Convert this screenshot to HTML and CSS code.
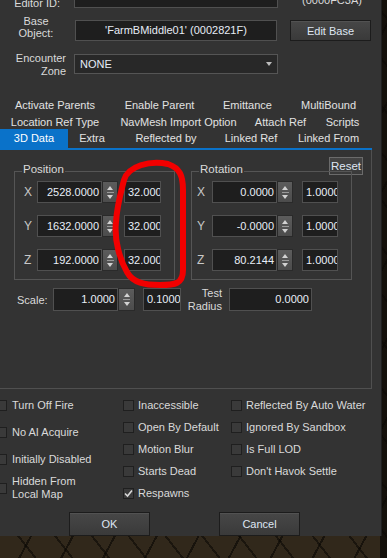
FILE: index.html
```html
<!DOCTYPE html>
<html>
<head>
    <meta charset="UTF-8">
    <title>Reference</title>
    <link rel="stylesheet" href="styles.css">
</head>
<body>
<div class="dlg">
    <div class="row row-editor">
        <span class="lbl-editor">Editor ID:</span>
        <div class="field field-editor"></div>
        <span class="formid">(0000FC3A)</span>
    </div>
    <div class="row row-base">
        <span class="lbl-base">Base<br>Object:</span>
        <div class="field field-base">'FarmBMiddle01' (0002821F)</div>
        <button class="btn btn-edit">Edit Base</button>
    </div>
    <div class="row row-zone">
        <span class="lbl-zone">Encounter<br>Zone</span>
        <div class="combo">NONE<em></em></div>
    </div>

    <div class="tabs">
        <div class="tabrow r1">
            <span>Activate Parents</span><span>Enable Parent</span><span>Emittance</span><span>MultiBound</span>
        </div>
        <div class="tabrow r2">
            <span>Location Ref Type</span><span>NavMesh Import Option</span><span>Attach Ref</span><span>Scripts</span>
        </div>
        <div class="tabrow r3">
            <span class="on">3D Data</span><span>Extra</span><span>Reflected by</span><span>Linked Ref</span><span>Linked From</span>
        </div>
    </div>

    <div class="panel">
        <button class="btn btn-reset">Reset</button>
        <div class="groups">
            <div class="grp grp-pos">
                <span class="grp-title">Position</span>
                <div class="vrow"><span class="axis">X</span><div class="num">2528.0000</div><div class="spin"><i></i></div><div class="step">32.0000</div></div>
                <div class="vrow"><span class="axis">Y</span><div class="num">1632.0000</div><div class="spin"><i></i></div><div class="step">32.0000</div></div>
                <div class="vrow"><span class="axis">Z</span><div class="num">192.0000</div><div class="spin"><i></i></div><div class="step">32.0000</div></div>
            </div>
            <div class="grp grp-rot">
                <span class="grp-title">Rotation</span>
                <div class="vrow"><span class="axis">X</span><div class="num">0.0000</div><div class="spin"><i></i></div><div class="step">1.0000</div></div>
                <div class="vrow"><span class="axis">Y</span><div class="num">-0.0000</div><div class="spin"><i></i></div><div class="step">1.0000</div></div>
                <div class="vrow"><span class="axis">Z</span><div class="num">80.2144</div><div class="spin"><i></i></div><div class="step">1.0000</div></div>
            </div>
        </div>
        <div class="scalerow">
            <span class="lbl-scale">Scale:</span>
            <div class="num">1.0000</div><div class="spin"><i></i></div><div class="step">0.1000</div>
            <span class="lbl-test">Test<br>Radius</span>
            <div class="num num-test">0.0000</div>
        </div>
    </div>

    <div class="checks">
        <div class="col col1">
            <label class="cb"><i></i>Turn Off Fire</label>
            <label class="cb"><i></i>No AI Acquire</label>
            <label class="cb"><i></i>Initially Disabled</label>
            <label class="cb two"><i></i>Hidden From<br>Local Map</label>
        </div>
        <div class="col">
            <label class="cb"><i></i>Inaccessible</label>
            <label class="cb"><i></i>Open By Default</label>
            <label class="cb"><i></i>Motion Blur</label>
            <label class="cb"><i></i>Starts Dead</label>
            <label class="cb"><i><svg width="9" height="9" viewBox="0 0 9 9"><path d="M1 4.5 L3.5 7 L8 1.5" fill="none" stroke="#d8d8d8" stroke-width="1.6"/></svg></i>Respawns</label>
        </div>
        <div class="col">
            <label class="cb"><i></i>Reflected By Auto Water</label>
            <label class="cb"><i></i>Ignored By Sandbox</label>
            <label class="cb"><i></i>Is Full LOD</label>
            <label class="cb"><i></i>Don't Havok Settle</label>
        </div>
    </div>

    <div class="btns">
        <button class="btn btn-dlg">OK</button>
        <button class="btn btn-dlg">Cancel</button>
    </div>
</div>

<svg class="mark" width="387" height="558" viewBox="0 0 387 558">
    <path d="M124 180 C128 166 150 160 168 164 C180 168 183 176 183 190 L183 270 C183 284 175 285 160 285 C145 285 133 283 127 272 C120 260 114 240 116 222 C117 205 121 192 124 180 Z" fill="none" stroke="#f20000" stroke-width="6" stroke-linejoin="round"/>
</svg>
</body>
</html>
```

FILE: styles.css
```css
* {
    box-sizing: border-box;
}

html, body {
    margin: 0;
    padding: 0;
}

body {
    position: relative;
    width: 387px;
    height: 558px;
    overflow: hidden;
    font-family: "Liberation Sans", Arial, sans-serif;
    font-size: 11px;
    color: #dadada;
    background:
        linear-gradient(90deg, rgba(0,0,0,0) 0 380px, rgba(10,8,5,.75) 380px),
        repeating-linear-gradient(118deg, rgba(0,0,0,0) 0 19px, rgba(8,6,3,.6) 19px 21px, rgba(0,0,0,0) 21px 37px),
        repeating-linear-gradient(52deg, rgba(0,0,0,0) 0 27px, rgba(8,6,3,.55) 27px 29px),
        #31281b;
}

.dlg {
    width: 382px;
    height: 548px;
    background: #333;
    border-right: 1px solid #1f1f1f;
}

.row {
    display: flex;
    align-items: flex-start;
}

.field {
    background: #1e1e1e;
    border: 1px solid #505050;
    color: #e6ecf6;
}

/* top fields */
.row-editor {
    margin-top: -12px;
    height: 20px;
}

.lbl-editor {
    width: 60px;
    text-align: right;
    padding-top: 9px;
    line-height: 13px;
}

.field-editor {
    margin-left: 14px;
    width: 204px;
    height: 20px;
}

.formid {
    margin-left: 24px;
    padding-top: 6px;
    line-height: 13px;
}

.row-base {
    margin-top: 12px;
    height: 21px;
}

.lbl-base {
    width: 72px;
    margin-top: -5px;
    text-align: center;
    line-height: 12px;
}

.field-base {
    margin-left: 3px;
    width: 202px;
    height: 21px;
    line-height: 19px;
    text-align: center;
}

.btn {
    font-family: inherit;
    font-size: 11px;
    color: #dfe6f2;
    background: linear-gradient(#474747, #3a3a3a);
    border: 1px solid #1c1c1c;
    box-shadow: inset 0 1px 0 #525252;
    padding: 0;
}

.btn-edit {
    margin-left: 13px;
    width: 81px;
    height: 21px;
}

.row-zone {
    margin-top: 13px;
    height: 20px;
}

.lbl-zone {
    width: 66px;
    margin-top: -2px;
    text-align: right;
    line-height: 13px;
}

.combo {
    position: relative;
    margin-left: 8px;
    width: 204px;
    height: 20px;
    padding-left: 5px;
    line-height: 18px;
    background: #282828;
    border: 1px solid #555;
    color: #e6ecf6;
}

.combo em {
    position: absolute;
    right: 5px;
    top: 7px;
    border-left: 3.5px solid transparent;
    border-right: 3.5px solid transparent;
    border-top: 4px solid #bdbdbd;
}

/* tabs */
.tabs {
    margin-top: 23px;
    width: 372px;
    border-bottom: 2px solid #0a72c9;
    color: #e2e2e2;
}

.tabrow {
    display: flex;
}

.tabrow span {
    text-align: center;
    white-space: nowrap;
}

.r1 {
    height: 17px;
    padding-top: 2px;
    line-height: 13px;
}

.r2 {
    height: 15px;
    padding-top: 2px;
    line-height: 13px;
}

.r3 {
    height: 19px;
    line-height: 19px;
}

.r1 span:nth-child(1) { width: 110px; }
.r1 span:nth-child(2) { width: 99px; }
.r1 span:nth-child(3) { width: 77px; }
.r1 span:nth-child(4) { width: 85px; }

.r2 span:nth-child(1) { width: 110px; }
.r2 span:nth-child(2) { width: 137px; }
.r2 span:nth-child(3) { width: 67px; }
.r2 span:nth-child(4) { width: 57px; }

.r3 span:nth-child(1) { width: 68px; }
.r3 span:nth-child(2) { width: 48px; }
.r3 span:nth-child(3) { width: 100px; }
.r3 span:nth-child(4) { width: 70px; }
.r3 span:nth-child(5) { width: 85px; }

.r3 .on {
    background: #0a72c9;
    color: #fff;
}

/* 3d data panel */
.panel {
    position: relative;
    width: 372px;
    height: 239px;
    padding: 21px 0 0 14px;
    border-right: 1px solid #505050;
    border-bottom: 1px solid #505050;
}

.btn-reset {
    position: absolute;
    top: 7px;
    right: 8px;
    width: 34px;
    height: 18px;
    font-size: 11.5px;
    border: 1px solid #6b6b6b;
    background: linear-gradient(#444, #393939);
    box-shadow: none;
}

.groups {
    display: flex;
    gap: 16px;
}

.grp {
    position: relative;
    width: 161px;
    height: 109px;
    padding: 9px 0 0 9px;
    border: 1px solid #555;
    display: flex;
    flex-direction: column;
    gap: 12px;
}

.grp-rot {
    padding-left: 5px;
}

.grp-title {
    position: absolute;
    top: -9px;
    left: 7px;
    padding: 0 1px;
    line-height: 13px;
    background: #333;
    font-size: 11.5px;
}

.vrow {
    display: flex;
    align-items: center;
    height: 22px;
}

.axis {
    width: 13px;
    color: #c8c8c8;
    font-size: 12px;
}

.grp-rot .axis {
    width: 15px;
}

.num, .step {
    height: 22px;
    line-height: 20px;
    background: #1e1e1e;
    border: 1px solid #505050;
    color: #e8eef8;
    white-space: nowrap;
    overflow: hidden;
}

.num {
    width: 65px;
    text-align: right;
    padding-right: 2px;
}

.step {
    width: 37px;
    margin-left: 6px;
    padding-left: 3px;
}

.grp-rot .step {
    width: 36px;
    margin-left: 9px;
}

.spin {
    position: relative;
    width: 16px;
    height: 22px;
    display: flex;
    flex-direction: column;
    align-items: center;
    justify-content: center;
    gap: 2px;
    background: linear-gradient(#5c5c5c, #4c4c4c);
    border: 1px solid #2a2a2a;
}

.spin::before {
    content: "";
    border-left: 3.5px solid transparent;
    border-right: 3.5px solid transparent;
    border-bottom: 4px solid #d2d2d2;
}

.spin::after {
    content: "";
    border-left: 3.5px solid transparent;
    border-right: 3.5px solid transparent;
    border-top: 4px solid #d2d2d2;
}

.spin i {
    width: 7px;
    height: 1px;
    background: #9a9a9a;
}

.scalerow {
    display: flex;
    align-items: center;
    margin-top: 8px;
    height: 23px;
}

.scalerow .num, .scalerow .step, .scalerow .spin {
    height: 23px;
    line-height: 21px;
}

.scalerow .spin {
    width: 17px;
}

.lbl-scale {
    width: 36px;
    margin-left: 3px;
}

.scalerow .step {
    width: 38px;
    margin-left: 8px;
}

.lbl-test {
    width: 41px;
    text-align: right;
    line-height: 13px;
}

.num-test {
    width: 83px;
    margin-left: 7px;
}

/* flags */
.checks {
    display: grid;
    grid-template-columns: 127px 108px auto;
    margin: 5px 0 0 -4px;
}

.col {
    display: flex;
    flex-direction: column;
}

.col1 {
    gap: 5px;
}

.cb {
    display: flex;
    align-items: center;
    gap: 4px;
    height: 22px;
    white-space: nowrap;
    color: #dadada;
}

.col1 .cb {
    gap: 5px;
}

.cb.two {
    height: 26px;
    line-height: 13px;
}

.cb i {
    flex: none;
    display: flex;
    align-items: center;
    justify-content: center;
    width: 11px;
    height: 11px;
    background: #3a3a3a;
    border: 1px solid #1f1f1f;
}

.btns {
    display: flex;
    gap: 69px;
    margin-top: 8px;
    padding-left: 69px;
}

.btn-dlg {
    width: 81px;
    height: 24px;
}

.mark {
    position: absolute;
    top: 0;
    left: 0;
    pointer-events: none;
}
```
